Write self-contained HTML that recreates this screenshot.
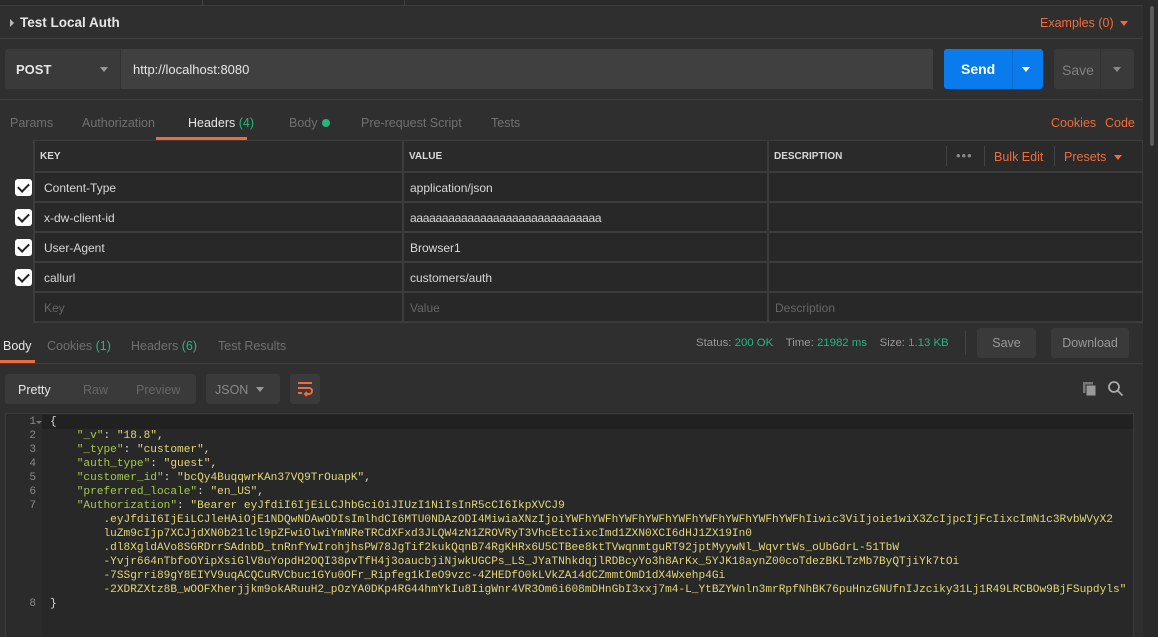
<!DOCTYPE html>
<html><head><meta charset="utf-8"><style>
*{box-sizing:border-box;margin:0;padding:0}
body{width:1158px;height:637px;overflow:hidden;background:#2f2f2f;font-family:"Liberation Sans",sans-serif;color:#ccc;position:relative;font-size:12px}
.a{position:absolute}
.or{color:#f26b3a}
.gr{color:#26b47f}
.tab{position:absolute;font-size:12.5px;color:#707070}
.cell{position:absolute;background:#282828;font-size:12px;color:#d8d8d8;padding-left:9px;line-height:30px}
.cb{position:absolute;left:15px;width:17px;height:17px;background:#fff;border-radius:3px}
.cb:after{content:"";position:absolute;left:5px;top:2px;width:5px;height:9px;border:solid #222;border-width:0 2px 2px 0;transform:rotate(45deg)}
pre{font-family:"Liberation Mono",monospace;font-size:11.15px;line-height:14px}
.k{color:#a6c94a}.s{color:#e2d776}.p{color:#ddd}
</style></head><body>
<div class="a" style="left:0;top:0;width:1158px;height:6px;background:#2a2a2a;border-bottom:1px solid #3c3c3c"></div>
<div class="a" style="left:202px;top:0;width:1px;height:6px;background:#444"></div>
<div class="a" style="left:404px;top:0;width:1px;height:6px;background:#444"></div>
<div class="a" style="left:10px;top:19px;width:0;height:0;border-left:4px solid #bbb;border-top:4px solid transparent;border-bottom:4px solid transparent"></div>
<div class="a" style="left:20px;top:15px;font-size:13.5px;font-weight:bold;color:#e6e6e6">Test Local Auth</div>
<div class="a or" style="left:1040px;top:16px;font-size:12.5px">Examples (0)</div>
<div class="a" style="left:1120px;top:21px;border-top:5px solid #f26b3a;border-left:4px solid transparent;border-right:4px solid transparent"></div>
<div class="a" style="left:0;top:38px;width:1143px;height:1px;background:#404040"></div>
<div class="a" style="left:5px;top:49px;width:115px;height:40px;background:#3a3a3a;border-radius:3px 0 0 3px"></div>
<div class="a" style="left:16px;top:62px;font-size:13px;font-weight:bold;color:#e6e6e6">POST</div>
<div class="a" style="left:100px;top:67px;border-top:5px solid #999;border-left:4px solid transparent;border-right:4px solid transparent"></div>
<div class="a" style="left:120px;top:49px;width:813px;height:40px;background:#404040;border-left:1px solid #333"></div>
<div class="a" style="left:133px;top:62px;font-size:13px;color:#e6e6e6">http://localhost:8080</div>
<div class="a" style="left:944px;top:49px;width:99px;height:40px;background:#097bed;border-radius:3px"></div>
<div class="a" style="left:1012px;top:49px;width:1px;height:40px;background:#0a6ccf"></div>
<div class="a" style="left:961px;top:61px;font-size:14px;font-weight:bold;color:#fff">Send</div>
<div class="a" style="left:1022px;top:67px;border-top:5px solid #fff;border-left:4px solid transparent;border-right:4px solid transparent"></div>
<div class="a" style="left:1054px;top:49px;width:80px;height:40px;background:#3a3a3a;border-radius:3px"></div>
<div class="a" style="left:1100px;top:49px;width:1px;height:40px;background:#333"></div>
<div class="a" style="left:1062px;top:62px;font-size:14px;color:#808080">Save</div>
<div class="a" style="left:1113px;top:67px;border-top:5px solid #888;border-left:4px solid transparent;border-right:4px solid transparent"></div>
<div class="a" style="left:0;top:99px;width:1143px;height:1px;background:#404040"></div>
<div class="tab" style="left:10px;top:116px">Params</div>
<div class="tab" style="left:82px;top:116px">Authorization</div>
<div class="tab" style="left:188px;top:116px;color:#e6e6e6">Headers <span class="gr">(4)</span></div>
<div class="tab" style="left:289px;top:116px">Body</div>
<div class="a" style="left:322px;top:119px;width:8px;height:8px;border-radius:50%;background:#26b47f"></div>
<div class="tab" style="left:361px;top:116px">Pre-request Script</div>
<div class="tab" style="left:491px;top:116px">Tests</div>
<div class="a or" style="left:1051px;top:116px;font-size:12.5px">Cookies</div>
<div class="a or" style="left:1105px;top:116px;font-size:12.5px">Code</div>
<div class="a" style="left:156px;top:137px;width:91px;height:3px;background:#f26b3a"></div>
<div class="a" style="left:0;top:140px;width:1143px;height:183px;background:#3c3c3c"></div>
<div class="a" style="left:0;top:140px;width:33px;height:183px;background:#2f2f2f"></div>
<div class="cell" style="left:35px;top:141px;width:367px;height:30px;background:#2a2a2a;font-size:10px;font-weight:bold;line-height:31px;padding-left:5px">KEY</div>
<div class="cell" style="left:404px;top:141px;width:363px;height:30px;background:#2a2a2a;font-size:10px;font-weight:bold;line-height:31px;padding-left:5px">VALUE</div>
<div class="cell" style="left:769px;top:141px;width:373px;height:30px;background:#2a2a2a;font-size:10px;font-weight:bold;line-height:31px;padding-left:5px">DESCRIPTION</div>
<div class="a" style="left:946px;top:146px;width:1px;height:20px;background:#444"></div>
<div class="a" style="left:956px;top:148px;color:#888;font-size:13px;letter-spacing:1px">•••</div>
<div class="a" style="left:984px;top:146px;width:1px;height:20px;background:#444"></div>
<div class="a or" style="left:994px;top:150px;font-size:12.5px">Bulk Edit</div>
<div class="a" style="left:1054px;top:146px;width:1px;height:20px;background:#444"></div>
<div class="a or" style="left:1064px;top:150px;font-size:12.5px">Presets</div>
<div class="a" style="left:1114px;top:155px;border-top:5px solid #f26b3a;border-left:4px solid transparent;border-right:4px solid transparent"></div>

<div class="cb" style="top:179px"></div><div class="cell" style="left:35px;top:173px;width:367px;height:28px">Content-Type</div><div class="cell" style="left:404px;top:173px;width:363px;height:28px;padding-left:6px">application/json</div><div class="cell" style="left:769px;top:173px;width:373px;height:28px"></div>
<div class="cb" style="top:209px"></div><div class="cell" style="left:35px;top:203px;width:367px;height:28px">x-dw-client-id</div><div class="cell" style="left:404px;top:203px;width:363px;height:28px;padding-left:6px;letter-spacing:-0.3px">aaaaaaaaaaaaaaaaaaaaaaaaaaaaaa</div><div class="cell" style="left:769px;top:203px;width:373px;height:28px"></div>
<div class="cb" style="top:239px"></div><div class="cell" style="left:35px;top:233px;width:367px;height:28px">User-Agent</div><div class="cell" style="left:404px;top:233px;width:363px;height:28px;padding-left:6px">Browser1</div><div class="cell" style="left:769px;top:233px;width:373px;height:28px"></div>
<div class="cb" style="top:269px"></div><div class="cell" style="left:35px;top:263px;width:367px;height:28px">callurl</div><div class="cell" style="left:404px;top:263px;width:363px;height:28px;padding-left:6px">customers/auth</div><div class="cell" style="left:769px;top:263px;width:373px;height:28px"></div>
<div class="cell" style="left:35px;top:293px;width:367px;height:28px;color:#666">Key</div><div class="cell" style="left:404px;top:293px;width:363px;height:28px;color:#666;padding-left:6px">Value</div><div class="cell" style="left:769px;top:293px;width:373px;height:28px;color:#666;padding-left:6px">Description</div>
<div class="tab" style="left:3px;top:339px;color:#e6e6e6">Body</div>
<div class="tab" style="left:47px;top:339px">Cookies <span class="gr">(1)</span></div>
<div class="tab" style="left:131px;top:339px">Headers <span class="gr">(6)</span></div>
<div class="tab" style="left:218px;top:339px">Test Results</div>
<div class="a" style="left:0;top:360px;width:35px;height:3px;background:#f26b3a"></div>
<div class="a" style="left:0;top:363px;width:1143px;height:1px;background:#404040"></div>
<div class="a" style="left:696px;top:337px;font-size:11.4px;color:#999">Status: <span class="gr">200 OK</span>&nbsp;&nbsp;&nbsp; Time: <span class="gr">21982 ms</span>&nbsp;&nbsp;&nbsp; Size: <span class="gr">1.13 KB</span></div>
<div class="a" style="left:965px;top:331px;width:1px;height:24px;background:#444"></div>
<div class="a" style="left:977px;top:328px;width:59px;height:30px;background:#3a3a3a;border-radius:3px;color:#999;font-size:12.5px;text-align:center;line-height:30px">Save</div>
<div class="a" style="left:1051px;top:328px;width:78px;height:30px;background:#3a3a3a;border-radius:3px;color:#999;font-size:12.5px;text-align:center;line-height:30px">Download</div>
<div class="a" style="left:5px;top:374px;width:191px;height:30px;background:#3a3a3a;border-radius:3px"></div>
<div class="a" style="left:18px;top:383px;font-size:12.5px;color:#e6e6e6">Pretty</div>
<div class="a" style="left:83px;top:383px;font-size:12.5px;color:#666">Raw</div>
<div class="a" style="left:136px;top:383px;font-size:12.5px;color:#666">Preview</div>
<div class="a" style="left:206px;top:374px;width:74px;height:30px;background:#3a3a3a;border-radius:3px"></div>
<div class="a" style="left:215px;top:383px;font-size:12.5px;color:#888">JSON</div>
<div class="a" style="left:256px;top:387px;border-top:5px solid #999;border-left:4px solid transparent;border-right:4px solid transparent"></div>
<div class="a" style="left:290px;top:374px;width:30px;height:30px;background:#3a3a3a;border-radius:3px"></div>
<svg class="a" style="left:297px;top:381px" width="16" height="16" viewBox="0 0 16 16" fill="none" stroke="#f26b3a" stroke-width="2"><path d="M1 2h14M1 7h11a3 3 0 0 1 0 6H8M1 12h4M10 11l-2 2 2 2"/></svg>
<svg class="a" style="left:1082px;top:381px" width="16" height="16" viewBox="0 0 16 16"><rect x="1" y="1" width="10" height="11" fill="#777"/><rect x="4" y="4" width="10" height="11" fill="#999" stroke="#2f2f2f"/></svg>
<svg class="a" style="left:1107px;top:380px" width="17" height="17" viewBox="0 0 17 17" fill="none" stroke="#aaa" stroke-width="1.8"><circle cx="7" cy="7" r="5"/><path d="M11 11l4.5 4.5"/></svg>
<div class="a" style="left:5px;top:413px;width:1129px;height:224px;background:#282828;border:1px solid #3a3a3a;border-bottom:none"></div>
<div class="a" style="left:6px;top:414px;width:36px;height:223px;background:#2b2b2b"></div>
<div class="a" style="left:42px;top:415px;width:1091px;height:14px;background:#212121"></div>
<pre class="a" style="left:6px;top:415px;width:30px;text-align:right;color:#888">1
2
3
4
5
6
7






8</pre>
<div class="a" style="left:36px;top:421px;border-top:3px solid #777;border-left:3px solid transparent;border-right:3px solid transparent"></div>
<pre class="a p" style="left:50px;top:415px">{
    <span class="k">"_v"</span>: <span class="s">"18.8"</span>,
    <span class="k">"_type"</span>: <span class="s">"customer"</span>,
    <span class="k">"auth_type"</span>: <span class="s">"guest"</span>,
    <span class="k">"customer_id"</span>: <span class="s">"bcQy4BuqqwrKAn37VQ9TrOuapK"</span>,
    <span class="k">"preferred_locale"</span>: <span class="s">"en_US"</span>,
    <span class="k">"Authorization"</span>: <span class="s">"Bearer eyJfdiI6IjEiLCJhbGciOiJIUzI1NiIsInR5cCI6IkpXVCJ9
        .eyJfdiI6IjEiLCJleHAiOjE1NDQwNDAwODIsImlhdCI6MTU0NDAzODI4MiwiaXNzIjoiYWFhYWFhYWFhYWFhYWFhYWFhYWFhYWFhYWFhIiwic3ViIjoie1wiX3ZcIjpcIjFcIixcImN1c3RvbWVyX2
        luZm9cIjp7XCJjdXN0b21lcl9pZFwiOlwiYmNReTRCdXFxd3JLQW4zN1ZROVRyT3VhcEtcIixcImd1ZXN0XCI6dHJ1ZX19In0
        .dl8XgldAVo8SGRDrrSAdnbD_tnRnfYwIrohjhsPW78JgTif2kukQqnB74RgKHRx6U5CTBee8ktTVwqnmtguRT92jptMyywNl_WqvrtWs_oUbGdrL-51TbW
        -Yvjr664nTbfoOYipXsiGlV8uYopdH2OQI38pvTfH4j3oaucbjiNjwkUGCPs_LS_JYaTNhkdqjlRDBcyYo3h8ArKx_5YJK18aynZ00coTdezBKLTzMb7ByQTjiYk7tOi
        -7SSgrri89gY8EIYV9uqACQCuRVCbuc1GYu0OFr_Ripfeg1kIeO9vzc-4ZHEDfO0kLVkZA14dCZmmtOmD1dX4Wxehp4Gi
        -2XDRZXtz8B_wOOFXherjjkm9okARuuH2_pOzYA0DKp4RG44hmYkIu8IigWnr4VR3Om6i608mDHnGbI3xxj7m4-L_YtBZYWnln3mrRpfNhBK76puHnzGNUfnIJzciky31Lj1R49LRCBOw9BjFSupdyls"</span>
}</pre>
<div class="a" style="left:1143px;top:0;width:15px;height:637px;background:#2a2a2a"></div>
<div class="a" style="left:1150px;top:6px;width:4px;height:140px;background:#5a5a5a;border-radius:2px"></div>
</body></html>
